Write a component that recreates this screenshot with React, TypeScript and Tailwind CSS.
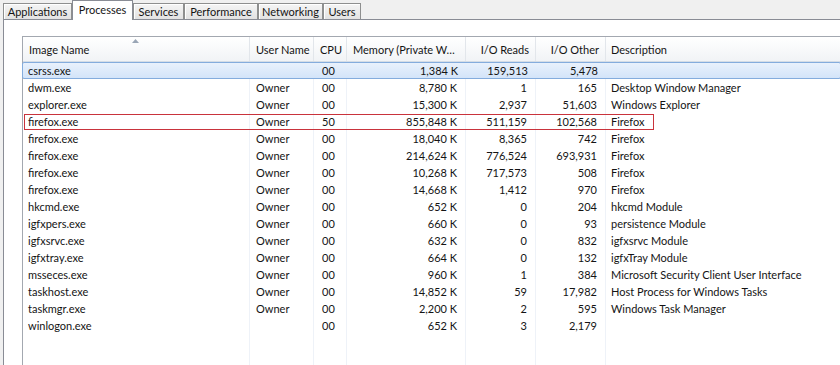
const rows: string[][] = [
  ["csrss.exe", "", "00", "1,384 K", "159,513", "5,478", ""],
  ["dwm.exe", "Owner", "00", "8,780 K", "1", "165", "Desktop Window Manager"],
  ["explorer.exe", "Owner", "00", "15,300 K", "2,937", "51,603", "Windows Explorer"],
  ["firefox.exe", "Owner", "50", "855,848 K", "511,159", "102,568", "Firefox"],
  ["firefox.exe", "Owner", "00", "18,040 K", "8,365", "742", "Firefox"],
  ["firefox.exe", "Owner", "00", "214,624 K", "776,524", "693,931", "Firefox"],
  ["firefox.exe", "Owner", "00", "10,268 K", "717,573", "508", "Firefox"],
  ["firefox.exe", "Owner", "00", "14,668 K", "1,412", "970", "Firefox"],
  ["hkcmd.exe", "Owner", "00", "652 K", "0", "204", "hkcmd Module"],
  ["igfxpers.exe", "Owner", "00", "660 K", "0", "93", "persistence Module"],
  ["igfxsrvc.exe", "Owner", "00", "632 K", "0", "832", "igfxsrvc Module"],
  ["igfxtray.exe", "Owner", "00", "664 K", "0", "132", "igfxTray Module"],
  ["msseces.exe", "Owner", "00", "960 K", "1", "384", "Microsoft Security Client User Interface"],
  ["taskhost.exe", "Owner", "00", "14,852 K", "59", "17,982", "Host Process for Windows Tasks"],
  ["taskmgr.exe", "Owner", "00", "2,200 K", "2", "595", "Windows Task Manager"],
  ["winlogon.exe", "", "00", "652 K", "3", "2,179", ""],
];

const cols = "grid grid-cols-[227px_64px_33px_119px_70px_70px_1fr]";

const tabs = [
  { label: "Applications", w: "w-[69px]" },
  { label: "Processes", w: "w-[61px]", active: true },
  { label: "Services", w: "w-[51px]" },
  { label: "Performance", w: "w-[74px]" },
  { label: "Networking", w: "w-[65px]" },
  { label: "Users", w: "w-[38px]" },
];

function Tab({ label, w, active }: { label: string; w: string; active?: boolean }) {
  if (active) {
    return (
      <div className={`${w} h-[20px] bg-white border-x border-t border-[#898c95] flex justify-center pt-[1px] leading-[15px]`}>
        {label}
      </div>
    );
  }
  return (
    <div
      className={`${w} h-[16px] mb-px bg-gradient-to-b from-[#f5f5f5] to-[#e2e2e2] border-x border-t border-[#8e8f8f] flex justify-center leading-[16px] shadow-[inset_1px_1px_0_#fff]`}
    >
      {label}
    </div>
  );
}

function Row({ r, selected }: { r: string[]; selected?: boolean }) {
  const sep = selected ? "" : "border-r border-[#eef2f8]";
  return (
    <div
      className={`${cols} h-[17px] ${
        selected
          ? "leading-[15px] bg-gradient-to-b from-[#e9f1fc] to-[#d3e4f9] border border-[#84acdd] rounded-[2px] -mx-px"
          : "leading-[17px]"
      }`}
    >
      <div className={`${sep} pl-[5px] truncate`}>{r[0]}</div>
      <div className={`${sep} pl-[6px]`}>{r[1]}</div>
      <div className={`${sep} pl-[8px]`}>{r[2]}</div>
      <div className={`${sep} pr-[8px] text-right`}>{r[3]}</div>
      <div className={`${sep} pr-[8px] text-right`}>{r[4]}</div>
      <div className={`${sep} pr-[8px] text-right`}>{r[5]}</div>
      <div className="pl-[5px] whitespace-nowrap">{r[6]}</div>
    </div>
  );
}

export default function App() {
  const hd = "border-r border-[#e2e6eb] px-[6px] pt-[2px] whitespace-nowrap overflow-hidden";
  return (
    <div
      className="w-[840px] h-[365px] overflow-hidden bg-[#f0f0f0] flex flex-col text-[11px] text-[#141414]"
      style={{ fontFamily: 'Lato, "Noto Sans", sans-serif' }}
    >
      {/* tab strip */}
      <div className="h-[20px] flex items-end pl-[3px] relative z-10">
        {tabs.map((t) => (
          <Tab key={t.label} {...t} />
        ))}
      </div>

      {/* tab page */}
      <div className="flex-1 ml-[3px] -mt-px border-l border-t border-[#898c95] bg-white pl-[18px] pt-[16px] flex flex-col">
        <div className="flex-1 border-l border-t border-[#a3a8b0] flex flex-col">
          {/* header */}
          <div
            className={`${cols} h-[25px] leading-[22px] bg-gradient-to-b from-white to-[#f1f3f6] border-b border-[#d5dde6]`}
          >
            <div className={`${hd} relative`}>
              Image Name
              <svg className="absolute left-[109px] top-[2px]" width="7" height="4" viewBox="0 0 7 4">
                <path d="M0 4 L3.5 0 L7 4 Z" fill="#9aa6b6" />
              </svg>
            </div>
            <div className={hd}>User Name</div>
            <div className={hd}>CPU</div>
            <div className={hd}>Memory (Private W…</div>
            <div className={`${hd} text-right`}>I/O Reads</div>
            <div className={`${hd} text-right`}>I/O Other</div>
            <div className="px-[5px] pt-[2px]">Description</div>
          </div>

          {/* body */}
          <div className="flex-1 flex flex-col relative">
            {rows.map((r, i) => (
              <Row key={i} r={r} selected={i === 0} />
            ))}
            <div className={`${cols} flex-1`}>
              <div className="border-r border-[#eef2f8]" />
              <div className="border-r border-[#eef2f8]" />
              <div className="border-r border-[#eef2f8]" />
              <div className="border-r border-[#eef2f8]" />
              <div className="border-r border-[#eef2f8]" />
              <div className="border-r border-[#eef2f8]" />
              <div />
            </div>
            {/* annotation around the busy firefox process */}
            <div className="absolute left-[1px] top-[52px] w-[630px] h-[16px] border border-[#c9333c] pointer-events-none" />
          </div>
        </div>
      </div>
    </div>
  );
}
